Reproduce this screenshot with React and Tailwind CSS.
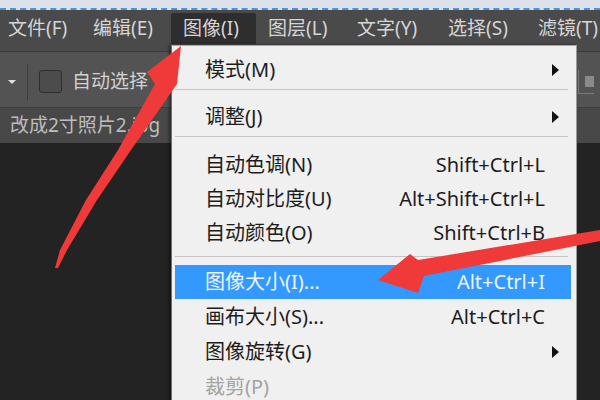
import React from "react";

const FONT = { fontFamily: '"Noto Sans", "Noto Sans CJK SC", sans-serif' };

function MenuBarItem({ label, w, active }) {
  return (
    <div
      className={`flex h-[31px] items-center pl-[12px] text-[19px] text-[#d6d6d6] ${active ? "bg-[#2e2e2e] rounded-t-[2px]" : ""}`}
      style={{ width: w }}
    >
      {label}
    </div>
  );
}

function Arrow() {
  return (
    <span className="mr-[-14px] ml-auto block h-0 w-0 border-y-[6px] border-l-[7px] border-y-transparent border-l-[#111]" />
  );
}

function Row({ label, shortcut, sub, hi, disabled, h, extra = "" }) {
  const color = hi ? "text-[#eef4ff]" : disabled ? "text-[#a3a3a3]" : "text-[#1c1c1c]";
  return (
    <div
      className={`ml-[3px] mr-[5px] flex items-center pl-[30px] pr-[26px] text-[20px] ${color} ${hi ? "bg-[#3399ff]" : ""} ${extra}`}
      style={{ height: h }}
    >
      <span>{label}</span>
      {shortcut && <span className="ml-auto">{shortcut}</span>}
      {sub && <Arrow />}
    </div>
  );
}

function Sep({ extra = "" }) {
  return <div className={`ml-[3px] mr-[8px] h-[1px] bg-[#c4c4c4] ${extra}`} />;
}

export default function App() {
  return (
    <div className="relative flex h-[400px] w-[600px] flex-col overflow-hidden bg-[#232323]" style={FONT}>
      {/* top strip */}
      <div className="h-[10px] shrink-0 border-b-2 border-dashed border-[#4a93e0] bg-[#dde2ea]" />

      {/* menu bar */}
      <div className="flex h-[42px] shrink-0 border-b border-[#3a3a3a] bg-[#4a4a4a] pt-[3px]">
        <div className="-ml-[4px] flex">
          <MenuBarItem label="文件(F)" w={85} />
          <MenuBarItem label="编辑(E)" w={90} />
          <MenuBarItem label="图像(I)" w={85} active />
          <MenuBarItem label="图层(L)" w={89} />
          <MenuBarItem label="文字(Y)" w={91} />
          <MenuBarItem label="选择(S)" w={90} />
          <MenuBarItem label="滤镜(T)" w={90} />
        </div>
      </div>

      {/* options toolbar */}
      <div className="flex h-[55px] shrink-0 items-center bg-[#535353] pt-[4px]">
        <span className="ml-[8px] block h-0 w-0 border-x-[4px] border-t-[4px] border-x-transparent border-t-[#e0e0e0]" />
        <div className="ml-[11px] h-[36px] w-[1px] bg-[#3c3c3c]" />
        <div className="ml-[11px] h-[23px] w-[23px] rounded-[3px] border border-[#2e2e2e] bg-[#4c4c4c]" />
        <span className="ml-[10px] text-[19px] text-[#d2d2d2]">自动选择</span>
        <div className="ml-auto mr-[6px] flex h-[24px] w-[16px] items-center justify-end border-b border-l border-[#7a7a7a]">
          <div className="h-[11px] w-[9px] bg-[#8a8a8a]" />
        </div>
      </div>

      {/* document tab */}
      <div className="flex h-[36px] shrink-0 items-center border-t border-[#3e3e3e] bg-[#484848]">
        <span className="ml-[10px] text-[19px] text-[#bdbdbd]">改成2寸照片2.jpg</span>
      </div>

      {/* canvas */}
      <div className="flex-1 bg-[#232323]" />

      {/* dropdown menu */}
      <div className="absolute left-[171px] top-[45px] h-[370px] w-[406px] border-l border-r border-t border-l-[#6e6e6e] border-r-[#9a9a9a] border-t-[#a8a8a8] bg-[#f0f0f0] shadow-[-2px_0_3px_rgba(0,0,0,0.45)]">
        <Row label="模式(M)" sub h={43} extra="pt-[5px]" />
        <Sep />
        <Row label="调整(J)" sub h={46} extra="pt-[8px]" />
        <Sep />
        <div className="h-[11px]" />
        <Row label="自动色调(N)" shortcut="Shift+Ctrl+L" h={34} />
        <Row label="自动对比度(U)" shortcut="Alt+Shift+Ctrl+L" h={34} />
        <Row label="自动颜色(O)" shortcut="Shift+Ctrl+B" h={34} />
        <Sep extra="mt-[6px]" />
        <div className="h-[8px]" />
        <Row label="图像大小(I)..." shortcut="Alt+Ctrl+I" hi h={34} />
        <Row label="画布大小(S)..." shortcut="Alt+Ctrl+C" h={35} />
        <Row label="图像旋转(G)" sub h={35} />
        <Row label="裁剪(P)" disabled h={35} />
      </div>

      {/* red annotation arrows */}
      <svg className="pointer-events-none absolute left-0 top-0" width="600" height="400" viewBox="0 0 600 400">
        <polygon
          fill="#f03a3a"
          points="181,46 177,84 131,150 97,200 67,250 58,268 55,268 60,250 86,200 118,150 155,84 147,72"
        />
        <polygon
          fill="#f03a3a"
          points="378,280 410,254 418,260 600,230 600,241 424,276 418,293"
        />
      </svg>
    </div>
  );
}
